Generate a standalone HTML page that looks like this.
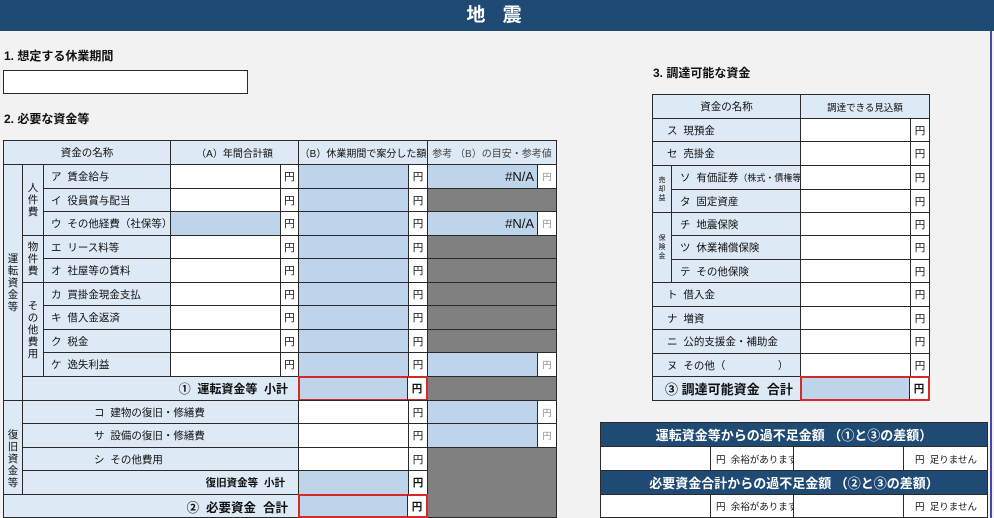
<!DOCTYPE html>
<html><head><meta charset="utf-8"><style>
body{margin:0;width:994px;height:518px;background:#f2f2f2;position:relative;overflow:hidden;font-family:"Liberation Sans","Noto Sans CJK JP",sans-serif;color:#111}
.c{position:absolute;box-sizing:border-box;border:1px solid #2a2a2a;font-size:10.5px;display:flex;align-items:center;white-space:nowrap;overflow:hidden}
.l{background:#dde9f5}.w{background:#fff}.b{background:#bdd4ea}.g{background:#808080}
.y{justify-content:center}
.r{border:2px solid #d42a2a}
.v{flex-direction:column;justify-content:center;line-height:12px;font-size:10.5px}
.t{position:absolute;font-size:12px;font-weight:bold}
</style></head><body>
<div style="position:absolute;left:0;top:0;width:994px;height:31px;background:#1e4a74;color:#fff;font-size:19px;font-weight:bold;text-align:center;line-height:31px;letter-spacing:6px">地 震</div>
<div style="position:absolute;left:990px;top:31px;width:2px;height:487px;background:#4a4a9a"></div>
<div class="t" style="left:4px;top:47px">1. 想定する休業期間</div>
<div class="c w" style="left:3px;top:70px;width:245px;height:24px"></div>
<div class="t" style="left:4px;top:110px">2. 必要な資金等</div>
<div class="t" style="left:653px;top:64px">3. 調達可能な資金</div>

<!-- left table header -->
<div class="c l y" style="left:3px;top:140px;width:168px;height:25px">資金の名称</div>
<div class="c l y" style="left:170px;top:140px;width:129px;height:25px;font-size:10px">（A）年間合計額</div>
<div class="c l y" style="left:298px;top:140px;width:130px;height:25px;font-size:10px">（B）休業期間で案分した額</div>
<div class="c l y" style="left:427px;top:140px;width:130px;height:25px;font-size:10px;color:#444">参考 （B）の目安・参考値</div>

<div class="c l v" style="left:3px;top:164px;width:20px;height:237px">運<br>転<br>資<br>金<br>等</div>
<div class="c l v" style="left:22px;top:164px;width:22px;height:72px">人<br>件<br>費</div>
<div class="c l v" style="left:22px;top:235px;width:22px;height:48px">物<br>件<br>費</div>
<div class="c l v" style="left:22px;top:282px;width:22px;height:95px">そ<br>の<br>他<br>費<br>用</div>

<div class="c l" style="left:43px;top:164px;width:128px;height:25px;padding-left:7px">ア&nbsp; 賃金給与</div>
<div class="c l" style="left:43px;top:188px;width:128px;height:24px;padding-left:7px">イ&nbsp; 役員賞与配当</div>
<div class="c l" style="left:43px;top:211px;width:128px;height:25px;padding-left:7px">ウ&nbsp; その他経費（社保等）</div>
<div class="c l" style="left:43px;top:235px;width:128px;height:24px;padding-left:7px">エ&nbsp; リース料等</div>
<div class="c l" style="left:43px;top:258px;width:128px;height:25px;padding-left:7px">オ&nbsp; 社屋等の賃料</div>
<div class="c l" style="left:43px;top:282px;width:128px;height:24px;padding-left:7px">カ&nbsp; 買掛金現金支払</div>
<div class="c l" style="left:43px;top:305px;width:128px;height:25px;padding-left:7px">キ&nbsp; 借入金返済</div>
<div class="c l" style="left:43px;top:329px;width:128px;height:24px;padding-left:7px">ク&nbsp; 税金</div>
<div class="c l" style="left:43px;top:352px;width:128px;height:25px;padding-left:7px">ケ&nbsp; 逸失利益</div>

<!-- A column -->
<div class="c w" style="left:170px;top:164px;width:111px;height:25px"></div>
<div class="c w" style="left:170px;top:188px;width:111px;height:24px"></div>
<div class="c b" style="left:170px;top:211px;width:111px;height:25px"></div>
<div class="c w" style="left:170px;top:235px;width:111px;height:24px"></div>
<div class="c w" style="left:170px;top:258px;width:111px;height:25px"></div>
<div class="c w" style="left:170px;top:282px;width:111px;height:24px"></div>
<div class="c w" style="left:170px;top:305px;width:111px;height:25px"></div>
<div class="c w" style="left:170px;top:329px;width:111px;height:24px"></div>
<div class="c w" style="left:170px;top:352px;width:111px;height:25px"></div>
<div class="c w y" style="left:280px;top:164px;width:19px;height:25px">円</div>
<div class="c w y" style="left:280px;top:188px;width:19px;height:24px">円</div>
<div class="c w y" style="left:280px;top:211px;width:19px;height:25px">円</div>
<div class="c w y" style="left:280px;top:235px;width:19px;height:24px">円</div>
<div class="c w y" style="left:280px;top:258px;width:19px;height:25px">円</div>
<div class="c w y" style="left:280px;top:282px;width:19px;height:24px">円</div>
<div class="c w y" style="left:280px;top:305px;width:19px;height:25px">円</div>
<div class="c w y" style="left:280px;top:329px;width:19px;height:24px">円</div>
<div class="c w y" style="left:280px;top:352px;width:19px;height:25px">円</div>

<!-- B column -->
<div class="c b" style="left:298px;top:164px;width:111px;height:213px"></div>
<div style="position:absolute;left:299px;top:188px;width:109px;height:1px;background:#2a2a2a"></div>
<div style="position:absolute;left:299px;top:211px;width:109px;height:1px;background:#2a2a2a"></div>
<div style="position:absolute;left:299px;top:235px;width:109px;height:1px;background:#2a2a2a"></div>
<div style="position:absolute;left:299px;top:258px;width:109px;height:1px;background:#2a2a2a"></div>
<div style="position:absolute;left:299px;top:282px;width:109px;height:1px;background:#2a2a2a"></div>
<div style="position:absolute;left:299px;top:305px;width:109px;height:1px;background:#2a2a2a"></div>
<div style="position:absolute;left:299px;top:329px;width:109px;height:1px;background:#2a2a2a"></div>
<div style="position:absolute;left:299px;top:352px;width:109px;height:1px;background:#2a2a2a"></div>
<div class="c w y" style="left:408px;top:164px;width:20px;height:25px">円</div>
<div class="c w y" style="left:408px;top:188px;width:20px;height:24px">円</div>
<div class="c w y" style="left:408px;top:211px;width:20px;height:25px">円</div>
<div class="c w y" style="left:408px;top:235px;width:20px;height:24px">円</div>
<div class="c w y" style="left:408px;top:258px;width:20px;height:25px">円</div>
<div class="c w y" style="left:408px;top:282px;width:20px;height:24px">円</div>
<div class="c w y" style="left:408px;top:305px;width:20px;height:25px">円</div>
<div class="c w y" style="left:408px;top:329px;width:20px;height:24px">円</div>
<div class="c w y" style="left:408px;top:352px;width:20px;height:25px">円</div>

<!-- ref column -->
<div class="c g" style="left:427px;top:164px;width:130px;height:354px"></div>
<div class="c b" style="left:427px;top:164px;width:111px;height:25px;justify-content:flex-end;padding-right:3px;font-size:13px">#N/A</div>
<div class="c w y" style="left:537px;top:164px;width:20px;height:25px;color:#888;font-size:9px">円</div>
<div class="c g" style="left:427px;top:188px;width:130px;height:24px"></div>
<div class="c b" style="left:427px;top:211px;width:111px;height:25px;justify-content:flex-end;padding-right:3px;font-size:13px">#N/A</div>
<div class="c w y" style="left:537px;top:211px;width:20px;height:25px;color:#888;font-size:9px">円</div>
<div class="c g" style="left:427px;top:235px;width:130px;height:24px"></div>
<div class="c g" style="left:427px;top:258px;width:130px;height:25px"></div>
<div class="c g" style="left:427px;top:282px;width:130px;height:24px"></div>
<div class="c g" style="left:427px;top:305px;width:130px;height:25px"></div>
<div class="c g" style="left:427px;top:329px;width:130px;height:24px"></div>
<div class="c b" style="left:427px;top:352px;width:111px;height:25px"></div>
<div class="c w y" style="left:537px;top:352px;width:20px;height:25px;color:#888;font-size:9px">円</div>
<div class="c b" style="left:427px;top:400px;width:111px;height:24px"></div>
<div class="c w y" style="left:537px;top:400px;width:20px;height:24px;color:#888;font-size:9px">円</div>
<div class="c b" style="left:427px;top:423px;width:111px;height:25px"></div>
<div class="c w y" style="left:537px;top:423px;width:20px;height:25px;color:#888;font-size:9px">円</div>

<!-- subtotal 1 -->
<div class="c l" style="left:22px;top:376px;width:277px;height:25px;justify-content:flex-end;padding-right:10px;font-size:12px;font-weight:bold">①&nbsp; 運転資金等&nbsp; 小計</div>
<div class="c b r" style="left:298px;top:376px;width:111px;height:25px"></div>
<div class="c w y r" style="left:407px;top:376px;width:21px;height:25px;border-left:1px solid #2a2a2a;font-weight:bold">円</div>

<!-- 復旧 -->
<div class="c l v" style="left:3px;top:400px;width:20px;height:118px">復<br>旧<br>資<br>金<br>等</div>
<div class="c l" style="left:22px;top:400px;width:277px;height:24px;padding-left:71px">コ&nbsp; 建物の復旧・修繕費</div>
<div class="c l" style="left:22px;top:423px;width:277px;height:25px;padding-left:71px">サ&nbsp; 設備の復旧・修繕費</div>
<div class="c l" style="left:22px;top:447px;width:277px;height:24px;padding-left:71px">シ&nbsp; その他費用</div>
<div class="c l" style="left:22px;top:470px;width:277px;height:25px;justify-content:flex-end;padding-right:13px;font-weight:bold">復旧資金等&nbsp; 小計</div>
<div class="c w" style="left:298px;top:400px;width:111px;height:24px"></div>
<div class="c w" style="left:298px;top:423px;width:111px;height:25px"></div>
<div class="c w" style="left:298px;top:447px;width:111px;height:24px"></div>
<div class="c b" style="left:298px;top:470px;width:111px;height:25px"></div>
<div class="c w y" style="left:408px;top:400px;width:20px;height:24px">円</div>
<div class="c w y" style="left:408px;top:423px;width:20px;height:25px">円</div>
<div class="c w y" style="left:408px;top:447px;width:20px;height:24px">円</div>
<div class="c w y" style="left:408px;top:470px;width:20px;height:25px;font-weight:bold">円</div>
<div class="c l" style="left:3px;top:494px;width:296px;height:24px;justify-content:flex-end;padding-right:10px;font-size:12.5px;font-weight:bold">②&nbsp; 必要資金&nbsp; 合計</div>
<div class="c b r" style="left:298px;top:494px;width:111px;height:24px"></div>
<div class="c w y r" style="left:407px;top:494px;width:21px;height:24px;border-left:1px solid #2a2a2a;font-weight:bold">円</div>

<!-- right table -->
<div class="c l y" style="left:652px;top:94px;width:149px;height:25px">資金の名称</div>
<div class="c l y" style="left:800px;top:94px;width:130px;height:25px;font-size:9.5px">調達できる見込額</div>
<div class="c l" style="left:652px;top:118px;width:149px;height:24px;padding-left:14px">ス&nbsp; 現預金</div>
<div class="c l" style="left:652px;top:141px;width:149px;height:25px;padding-left:14px">セ&nbsp; 売掛金</div>
<div class="c l v" style="left:652px;top:165px;width:20px;height:48px;font-size:7px;line-height:9px">売<br>却<br>益</div>
<div class="c l" style="left:671px;top:165px;width:130px;height:25px;padding-left:8px">ソ&nbsp; 有価証券<span style="font-size:9px">（株式・債権等）</span></div>
<div class="c l" style="left:671px;top:189px;width:130px;height:24px;padding-left:8px">タ&nbsp; 固定資産</div>
<div class="c l v" style="left:652px;top:212px;width:20px;height:71px;font-size:7px;line-height:9px">保<br>険<br>金</div>
<div class="c l" style="left:671px;top:212px;width:130px;height:24px;padding-left:8px">チ&nbsp; 地震保険</div>
<div class="c l" style="left:671px;top:235px;width:130px;height:25px;padding-left:8px">ツ&nbsp; 休業補償保険</div>
<div class="c l" style="left:671px;top:259px;width:130px;height:24px;padding-left:8px">テ&nbsp; その他保険</div>
<div class="c l" style="left:652px;top:282px;width:149px;height:25px;padding-left:14px">ト&nbsp; 借入金</div>
<div class="c l" style="left:652px;top:306px;width:149px;height:24px;padding-left:14px">ナ&nbsp; 増資</div>
<div class="c l" style="left:652px;top:329px;width:149px;height:25px;padding-left:14px">ニ&nbsp; 公的支援金・補助金</div>
<div class="c l" style="left:652px;top:353px;width:149px;height:24px;padding-left:14px">ヌ&nbsp; その他（&nbsp;&nbsp;&nbsp;&nbsp;&nbsp;&nbsp;&nbsp;&nbsp;&nbsp;&nbsp;&nbsp;&nbsp;&nbsp;&nbsp;&nbsp;&nbsp;&nbsp;&nbsp;）</div>
<div class="c l" style="left:652px;top:376px;width:149px;height:25px;padding-left:12px;font-size:13px;font-weight:bold">③ 調達可能資金&nbsp; 合計</div>

<div class="c w" style="left:800px;top:118px;width:111px;height:24px"></div>
<div class="c w" style="left:800px;top:141px;width:111px;height:25px"></div>
<div class="c w" style="left:800px;top:165px;width:111px;height:25px"></div>
<div class="c w" style="left:800px;top:189px;width:111px;height:24px"></div>
<div class="c w" style="left:800px;top:212px;width:111px;height:24px"></div>
<div class="c w" style="left:800px;top:235px;width:111px;height:25px"></div>
<div class="c w" style="left:800px;top:259px;width:111px;height:24px"></div>
<div class="c w" style="left:800px;top:282px;width:111px;height:25px"></div>
<div class="c w" style="left:800px;top:306px;width:111px;height:24px"></div>
<div class="c w" style="left:800px;top:329px;width:111px;height:25px"></div>
<div class="c w" style="left:800px;top:353px;width:111px;height:24px"></div>
<div class="c w y" style="left:910px;top:118px;width:20px;height:24px">円</div>
<div class="c w y" style="left:910px;top:141px;width:20px;height:25px">円</div>
<div class="c w y" style="left:910px;top:165px;width:20px;height:25px">円</div>
<div class="c w y" style="left:910px;top:189px;width:20px;height:24px">円</div>
<div class="c w y" style="left:910px;top:212px;width:20px;height:24px">円</div>
<div class="c w y" style="left:910px;top:235px;width:20px;height:25px">円</div>
<div class="c w y" style="left:910px;top:259px;width:20px;height:24px">円</div>
<div class="c w y" style="left:910px;top:282px;width:20px;height:25px">円</div>
<div class="c w y" style="left:910px;top:306px;width:20px;height:24px">円</div>
<div class="c w y" style="left:910px;top:329px;width:20px;height:25px">円</div>
<div class="c w y" style="left:910px;top:353px;width:20px;height:24px">円</div>
<div class="c b r" style="left:800px;top:376px;width:111px;height:25px"></div>
<div class="c w y r" style="left:909px;top:376px;width:21px;height:25px;border-left:1px solid #2a2a2a;font-weight:bold">円</div>

<!-- bottom box -->
<div class="c y" style="left:600px;top:422px;width:388px;height:25px;background:#1e4a74;color:#fff;font-size:13px;font-weight:bold">運転資金等からの過不足金額 （①と③の差額）</div>
<div class="c w" style="left:600px;top:446px;width:111px;height:25px"></div>
<div class="c w" style="left:710px;top:446px;width:84px;height:25px;padding-left:5px;font-size:9.5px">円&nbsp; 余裕があります</div>
<div class="c w" style="left:793px;top:446px;width:111px;height:25px"></div>
<div class="c w" style="left:903px;top:446px;width:85px;height:25px;justify-content:flex-end;padding-right:10px;font-size:9.5px">円&nbsp; 足りません</div>
<div class="c y" style="left:600px;top:470px;width:388px;height:25px;background:#1e4a74;color:#fff;font-size:13px;font-weight:bold">必要資金合計からの過不足金額 （②と③の差額）</div>
<div class="c w" style="left:600px;top:494px;width:111px;height:24px"></div>
<div class="c w" style="left:710px;top:494px;width:84px;height:24px;padding-left:5px;font-size:9.5px">円&nbsp; 余裕があります</div>
<div class="c w" style="left:793px;top:494px;width:111px;height:24px"></div>
<div class="c w" style="left:903px;top:494px;width:85px;height:24px;justify-content:flex-end;padding-right:10px;font-size:9.5px">円&nbsp; 足りません</div>
</body></html>
